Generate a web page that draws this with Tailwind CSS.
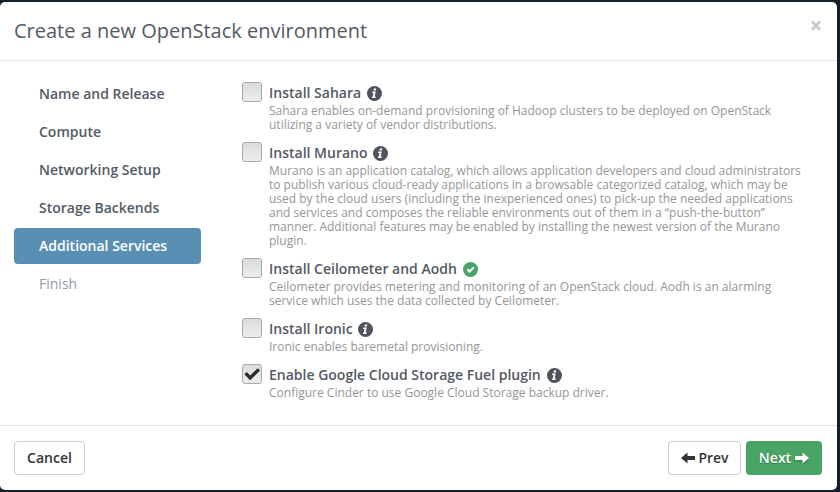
<!DOCTYPE html>
<html lang="en">
<head>
<meta charset="utf-8">
<title>Create a new OpenStack environment</title>
<script src="https://cdn.jsdelivr.net/npm/@tailwindcss/browser@4"></script>
</head>
<body class="h-[492px] w-[840px] overflow-hidden bg-[#15202a] pt-[2px] font-['Open_Sans',sans-serif] text-[14px]">
<svg class="hidden">
  <symbol id="info" viewBox="0 0 15 15"><circle cx="7.5" cy="7.5" r="7.5" fill="#4e545e"/><path d="M6.9 2.5h2.4l-.4 2H6.5zM5.3 5.6h3.4l-1 4.9h1.1l-.3 1.5H4.9l.3-1.5h.6l.7-3.4H5z" fill="#fff"/></symbol>
  <symbol id="ok" viewBox="0 0 15 15"><circle cx="7.5" cy="7.5" r="7.5" fill="#48a565"/><path d="M4.3 7.2l2.3 2.3 4.2-4.1" fill="none" stroke="#fff" stroke-width="2.1"/></symbol>
</svg>
<div class="flex h-[488px] w-[837px] flex-col rounded-[5px] bg-white text-[#535a64]">
  <header class="flex h-[59px] shrink-0 items-start justify-between border-b border-[#e2e2e2] pr-[16px] pl-[14px]">
    <h1 class="pt-[14px] text-[20px] leading-[30px] whitespace-nowrap">Create a new OpenStack environment</h1>
    <svg class="mt-[18px] h-[11px] w-[10px]" viewBox="0 0 10 11"><path d="M1 1.5l8 8M9 1.5l-8 8" stroke="#c8c8c8" stroke-width="2.6"/></svg>
  </header>
  <main class="flex h-[365px] shrink-0 border-b border-[#e2e2e2] pt-[15px] pl-[14px]">
    <nav class="flex w-[187px] flex-col gap-[2px] font-semibold leading-[36px]">
      <a class="h-[36px] pl-[25px]">Name and Release</a>
      <a class="h-[36px] pl-[25px]">Compute</a>
      <a class="h-[36px] pl-[25px]">Networking Setup</a>
      <a class="h-[36px] pl-[25px]">Storage Backends</a>
      <a class="h-[36px] rounded-[4px] bg-[#5a8fb4] pl-[25px] text-white">Additional Services</a>
      <a class="h-[36px] pl-[25px] font-normal text-[#959ba1]">Finish</a>
    </nav>
    <section class="ml-[41px] pt-[6px]">
      <div class="flex gap-[7px] pb-[10px]">
        <span class="h-[20px] w-[20px] rounded-[3px] border border-[#aaa] bg-linear-to-b from-[#dcdcdc] to-[#ededed]"></span>
        <div>
          <div class="flex h-[22px] gap-[6px] font-semibold leading-[21px]">Install Sahara<svg class="mt-[4px] h-[15px] w-[15px]"><use href="#info"/></svg></div>
          <p class="text-[12px] leading-[14px] whitespace-nowrap text-[#969696]">Sahara enables on-demand provisioning of Hadoop clusters to be deployed on OpenStack<br>utilizing a variety of vendor distributions.</p>
        </div>
      </div>
      <div class="flex gap-[7px] pb-[10px]">
        <span class="h-[20px] w-[20px] rounded-[3px] border border-[#aaa] bg-linear-to-b from-[#dcdcdc] to-[#ededed]"></span>
        <div>
          <div class="flex h-[22px] gap-[6px] font-semibold leading-[21px]">Install Murano<svg class="mt-[4px] h-[15px] w-[15px]"><use href="#info"/></svg></div>
          <p class="text-[12px] leading-[14px] whitespace-nowrap text-[#969696]">Murano is an application catalog, which allows application developers and cloud administrators<br>to publish various cloud-ready applications in a browsable categorized catalog, which may be<br>used by the cloud users (including the inexperienced ones) to pick-up the needed applications<br>and services and composes the reliable environments out of them in a “push-the-button”<br>manner. Additional features may be enabled by installing the newest version of the Murano<br>plugin.</p>
        </div>
      </div>
      <div class="flex gap-[7px] pb-[10px]">
        <span class="h-[20px] w-[20px] rounded-[3px] border border-[#aaa] bg-linear-to-b from-[#dcdcdc] to-[#ededed]"></span>
        <div>
          <div class="flex h-[22px] gap-[6px] font-semibold leading-[21px]">Install Ceilometer and Aodh<svg class="mt-[4px] h-[15px] w-[15px]"><use href="#ok"/></svg></div>
          <p class="text-[12px] leading-[14px] whitespace-nowrap text-[#969696]">Ceilometer provides metering and monitoring of an OpenStack cloud. Aodh is an alarming<br>service which uses the data collected by Ceilometer.</p>
        </div>
      </div>
      <div class="flex gap-[7px] pb-[10px]">
        <span class="h-[20px] w-[20px] rounded-[3px] border border-[#aaa] bg-linear-to-b from-[#dcdcdc] to-[#ededed]"></span>
        <div>
          <div class="flex h-[22px] gap-[5px] font-semibold leading-[21px]">Install Ironic<svg class="mt-[4px] h-[15px] w-[15px]"><use href="#info"/></svg></div>
          <p class="text-[12px] leading-[14px] whitespace-nowrap text-[#969696]">Ironic enables baremetal provisioning.</p>
        </div>
      </div>
      <div class="flex gap-[7px]">
        <span class="h-[20px] w-[20px] rounded-[3px] border border-[#aaa] bg-linear-to-b from-[#dcdcdc] to-[#ededed]"><svg class="h-[18px] w-[18px]" viewBox="0 0 18 18"><path d="M2.6 8.2l4.5 4.8 8.8-8.7" fill="none" stroke="#2b2b2b" stroke-width="3.3"/></svg></span>
        <div>
          <div class="flex h-[22px] gap-[6px] font-semibold leading-[21px]">Enable Google Cloud Storage Fuel plugin<svg class="mt-[4px] h-[15px] w-[15px]"><use href="#info"/></svg></div>
          <p class="text-[12px] leading-[14px] whitespace-nowrap text-[#969696]">Configure Cinder to use Google Cloud Storage backup driver.</p>
        </div>
      </div>
    </section>
  </main>
  <footer class="flex gap-[5px] pt-[15px] pr-[15px] pl-[14px] font-semibold text-[#333]">
    <button class="mr-auto h-[34px] w-[71px] rounded-[4px] border border-[#ccc] pb-[2px]">Cancel</button>
    <button class="flex h-[34px] w-[73px] items-center justify-center gap-[3px] rounded-[4px] border border-[#ccc] pb-[2px] pl-px"><svg class="mt-[2px] h-[12px] w-[14px]" viewBox="0 0 14 12"><path d="M0 6L6.5.4V4H14v4H6.5v3.6z" fill="#333"/></svg>Prev</button>
    <button class="flex h-[34px] w-[76px] items-center justify-center gap-[4px] rounded-[4px] bg-[#48a565] pb-[2px] text-white text-shadow-[0_1px_1px_rgba(0,0,0,0.3)]">Next<svg class="mt-[2px] h-[12px] w-[14px] drop-shadow-[0_1px_1px_rgba(0,0,0,0.3)]" viewBox="0 0 14 12"><path d="M14 6L7.5.4V4H0v4h7.5v3.6z" fill="#fff"/></svg></button>
  </footer>
</div>
</body>
</html>
